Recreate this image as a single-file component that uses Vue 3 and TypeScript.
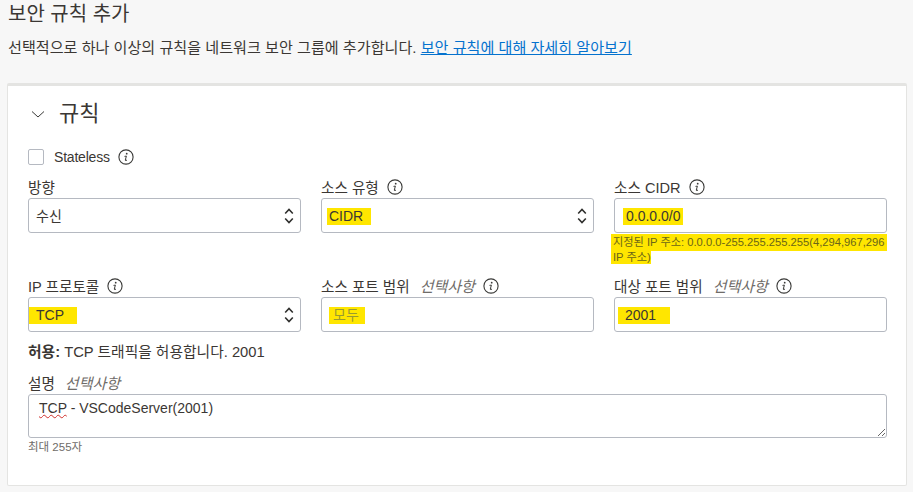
<template>
  <div class="page">
    <h1 class="title">보안 규칙 추가</h1>
    <p class="intro">
      선택적으로 하나 이상의 규칙을 네트워크 보안 그룹에 추가합니다.
      <a href="#" class="link">보안 규칙에 대해 자세히 알아보기</a>
    </p>

    <section class="card">
      <div class="card-head">
        <svg class="caret" width="16" height="16" viewBox="0 0 16 16">
          <path d="M2 5.5 L8 11 L14 5.5" fill="none" stroke="#3a3a38" stroke-width="1" />
        </svg>
        <h2>규칙</h2>
      </div>

      <div class="stateless">
        <span class="checkbox"></span>
        <span class="stateless-text">Stateless</span>
        <svg class="info" width="16" height="16" viewBox="0 0 16 16">
          <circle cx="8" cy="8" r="7.1" fill="none" stroke="#3a3a38" stroke-width="1.1" />
          <circle cx="8.7" cy="4.7" r="0.9" fill="#3a3a38" />
          <path d="M6.5 7.4 L8.4 7.1 L7.3 11 Q7.2 11.8 8 11.5 L9 11" fill="none" stroke="#3a3a38" stroke-width="1" />
        </svg>
      </div>

      <div class="grid">
        <div v-for="f in fields" :key="f.label" class="field">
          <div class="label">
            <span>{{ f.label }}</span>
            <em v-if="f.optional">선택사항</em>
            <svg v-if="!f.noInfo" class="info" width="16" height="16" viewBox="0 0 16 16">
              <circle cx="8" cy="8" r="7.1" fill="none" stroke="#3a3a38" stroke-width="1.1" />
              <circle cx="8.7" cy="4.7" r="0.9" fill="#3a3a38" />
              <path d="M6.5 7.4 L8.4 7.1 L7.3 11 Q7.2 11.8 8 11.5 L9 11" fill="none" stroke="#3a3a38" stroke-width="1" />
            </svg>
          </div>
          <div class="control">
            <span class="mark" :class="f.cls">{{ f.value }}</span>
            <svg v-if="f.select" class="updown" width="10" height="16" viewBox="0 0 10 16">
              <path d="M1.2 5.5 L5 1.5 L8.8 5.5 M1.2 10.5 L5 14.5 L8.8 10.5" fill="none" stroke="#2f2f2d" stroke-width="1.6" />
            </svg>
          </div>
          <div v-if="f.help" class="help">
            <span>지정된 IP 주소: 0.0.0.0-255.255.255.255(4,294,967,296</span>
            <span class="help-2">IP 주소)</span>
          </div>
        </div>
      </div>

      <p class="allow"><strong>허용:</strong> TCP 트래픽을 허용합니다. 2001</p>

      <div class="label desc-label">
        <span>설명</span>
        <em>선택사항</em>
      </div>
      <div class="textarea"><span class="typo">TCP</span> - VSCodeServer(2001)</div>
      <div class="limit">최대 255자</div>
    </section>
  </div>
</template>

<script setup lang="ts">
interface Field {
  label: string;
  value: string;
  cls: string;
  optional?: boolean;
  select?: boolean;
  help?: boolean;
  noInfo?: boolean;
}

const fields: Field[] = [
  { label: "방향", value: "수신", cls: "plain", select: true, noInfo: true },
  { label: "소스 유형", value: "CIDR", cls: "m-cidr", select: true },
  { label: "소스 CIDR", value: "0.0.0.0/0", cls: "m-ip", help: true },
  { label: "IP 프로토콜", value: "TCP", cls: "m-tcp", select: true },
  { label: "소스 포트 범위", value: "모두", cls: "m-any", optional: true },
  { label: "대상 포트 범위", value: "2001", cls: "m-port", optional: true },
];
</script>

<style>
html,
body {
  background: #f7f7f7;
}
</style>

<style scoped>
.page {
  width: 913px;
  height: 492px;
  overflow: hidden;
  box-sizing: border-box;
  padding: 0 6px 0 7px;
  font-family: "Liberation Sans", "Noto Sans CJK KR", sans-serif;
  color: #3b3734;
  font-size: 14px;
}

.title {
  margin: 0;
  padding-left: 1px;
  font-size: 20px;
  font-weight: 400;
  line-height: 28px;
}

.intro {
  margin: 9px 0 0;
  padding-left: 1px;
  font-size: 15.1px;
  line-height: 22px;
}

.link {
  color: #0572ce;
  text-decoration: underline;
}

.card {
  margin-top: 24px;
  height: 403px;
  box-sizing: border-box;
  background: #fff;
  border: 1px solid #e4e4e2;
  border-top: 3px solid #e4e4e2;
  border-radius: 2px;
  padding: 12px 19px 0 20px;
}

.card-head {
  display: flex;
  align-items: center;
  gap: 13px;
  height: 32px;
  padding-left: 2px;
}

.card-head h2 {
  margin: 0;
  font-size: 22px;
  font-weight: 400;
  line-height: 32px;
}

.stateless {
  display: flex;
  align-items: center;
  margin-top: 18px;
  height: 18px;
}

.checkbox {
  width: 14px;
  height: 14px;
  border: 1px solid #b5b9c1;
  border-radius: 2px;
  background: #fff;
}

.stateless-text {
  margin-left: 10px;
  font-size: 14px;
  letter-spacing: -0.2px;
}

.info {
  margin-left: 8px;
  flex: none;
}

.grid {
  display: grid;
  grid-template-columns: repeat(3, 273px);
  column-gap: 20px;
  row-gap: 10px;
  margin-top: 9px;
}

.label {
  display: flex;
  align-items: center;
  height: 23px;
  font-size: 14.6px;
  white-space: nowrap;
}

.label em {
  margin-left: 10px;
  color: #6f6c69;
  font-style: italic;
  font-size: 15px;
}

.control {
  display: flex;
  align-items: center;
  justify-content: space-between;
  height: 35px;
  box-sizing: border-box;
  border: 1px solid #b5b9c1;
  border-radius: 3px;
  background: #fff;
  padding: 0 6px 0 7px;
}

.mark {
  display: inline-block;
  background: #ffe600;
  line-height: 17px;
  font-size: 14px;
  margin-top: 2px;
}

.plain {
  background: none;
}

.m-cidr {
  margin-left: -2px;
  padding: 0 8px 0 2px;
}

.m-ip {
  margin-left: 1px;
  padding: 0 2px 0 3px;
}

.m-tcp {
  margin-left: -7px;
  padding: 0 13px 0 7px;
}

.m-any {
  color: #9a9a30;
  padding: 0 6px 0 4px;
}

.m-port {
  margin-left: -4px;
  padding: 0 14px 0 7px;
}

.help {
  margin: 1px -3px 0;
  width: 276px;
  font-size: 11.2px;
  color: #6a6518;
}

.help span {
  display: block;
  background: #ffe600;
  line-height: 17px;
  padding-left: 2px;
  white-space: nowrap;
}

.help .help-2 {
  width: fit-content;
  line-height: 13px;
}

.allow {
  margin: 10px 0 0;
  font-size: 14.75px;
  line-height: 20px;
}

.desc-label {
  margin-top: 9px;
}

.textarea {
  height: 44px;
  box-sizing: border-box;
  border: 1px solid #b5b9c1;
  border-radius: 3px;
  padding: 4px 10px;
  line-height: 18px;
  overflow: auto;
  resize: vertical;
}

.typo {
  text-decoration: underline wavy #d0312d 1px;
}

.limit {
  margin-top: 2px;
  font-size: 11.5px;
  color: #6f6c69;
  line-height: 14px;
}
</style>
